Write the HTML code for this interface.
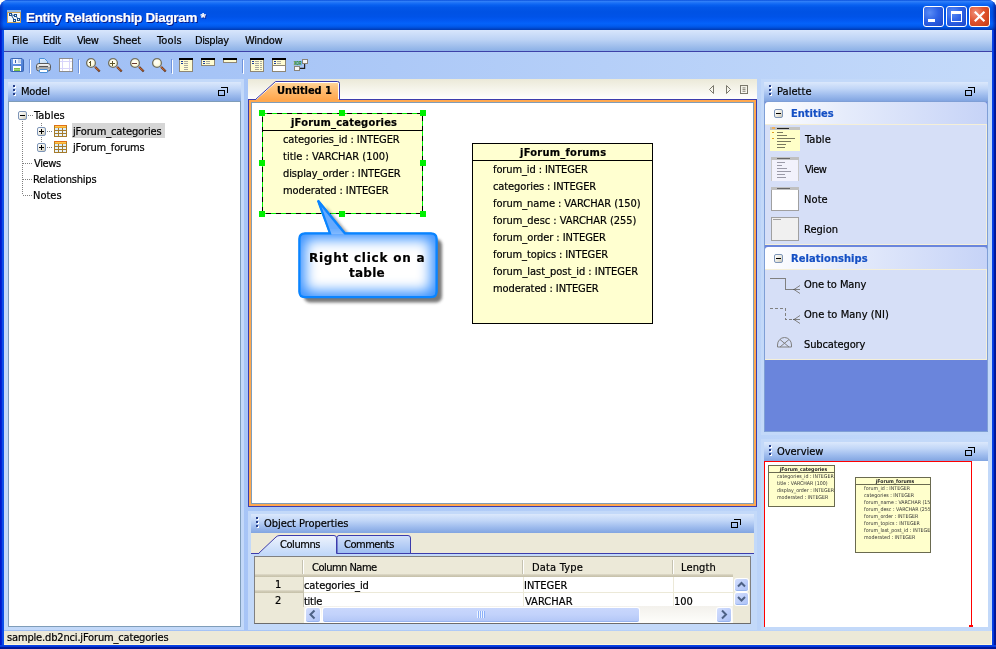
<!DOCTYPE html>
<html><head><meta charset="utf-8"><title>Entity Relationship Diagram *</title>
<style>
*{box-sizing:border-box;margin:0;padding:0}
html,body{width:996px;height:649px;overflow:hidden;background:#fff}
body{position:relative;font-family:"DejaVu Sans Condensed","Liberation Sans",sans-serif;font-size:11px;color:#000;line-height:13px}
.a{position:absolute}
.t{position:absolute;white-space:nowrap;line-height:13px;height:13px;will-change:transform;-webkit-text-stroke:0.2px}
.b{font-weight:bold}
svg{position:absolute;overflow:visible}
#win{left:0;top:0;width:996px;height:649px;background:#0b3fe0;border-radius:8px 8px 0 0;overflow:hidden}
#fl{left:0;top:30px;width:4px;height:619px;background:linear-gradient(to right,#0018cc 0%,#0018cc 30%,#0c4ce8 62%,#0a52ec 100%)}
#fr{left:992px;top:30px;width:4px;height:619px;background:linear-gradient(to right,#0a48e8 0%,#0538dc 40%,#001aa0 62%,#00138c 100%)}
#fb{left:0;top:645px;width:996px;height:4px;background:linear-gradient(to bottom,#0a48e8 0%,#0538dc 40%,#001aa0 62%,#00138c 100%)}
#titlebar{left:0;top:0;width:996px;height:30px;background:linear-gradient(to bottom,#0a50dc 0%,#2f7ef8 5%,#1a70f6 10%,#0860f0 17%,#0256e8 25%,#0052e4 40%,#0053e8 56%,#0259f2 68%,#0462fa 78%,#025cf0 86%,#0050dc 92%,#0042c0 97%,#0038b0 100%)}
.wb{position:absolute;top:6px;width:21px;height:21px;border:1px solid #fff;border-radius:3px;background:radial-gradient(circle at 30% 30%,#5a8cf5 0%,#2d62e6 45%,#1c46c8 100%)}
.wb.c{background:radial-gradient(circle at 30% 30%,#f0917a 0%,#e0532f 45%,#c23a12 100%)}
#client{left:4px;top:30px;width:988px;height:615px;background:linear-gradient(to right,#9ebef5 0%,#c4dafa 100%)}
.dock{position:absolute;background:#c3d9f9}
#menubar{left:4px;top:30px;width:988px;height:21px;background:linear-gradient(to bottom,#d8e6fc 0%,#bdd3f5 45%,#8bb0e6 100%)}
#menuline{left:4px;top:51px;width:988px;height:1px;background:#3d41a8}
#status{left:4px;top:631px;width:988px;height:14px;background:#ece9d8;border-right:1px solid #fff6d8;border-bottom:1px solid #fff6d8}
.hdr{position:absolute;height:19px;background:linear-gradient(to bottom,#dbe8fc 0%,#c1d6f7 35%,#9dbbed 70%,#82a5e1 100%)}
.sep{position:absolute;top:59px;width:1px;height:14px;background:#6f93dc}
.sep:after{content:"";position:absolute;left:1px;top:1px;width:1px;height:14px;background:#fff}
.grip{position:absolute;width:3px;height:13px}
.grip i{position:absolute;left:0;width:2px;height:2px;background:#27408b;box-shadow:1px 1px 0 #fff}
.tbl{position:absolute;background:#ffffd0;border:1px solid #000}
.tbl .h{position:absolute;left:0;right:0;top:0;height:17px;border-bottom:1px solid #000}
.hd{position:absolute;width:6px;height:6px;background:#00f000}
.grp{position:absolute;left:765px;width:222px;height:22px;background:linear-gradient(to right,#ffffff 0%,#e6ecfb 35%,#c6d3f7 100%);border-radius:3px 3px 0 0}
.grpb{position:absolute;left:765px;width:222px;background:#d6dff7;border:1px solid #f4efd8;border-left:none}
.mb{position:absolute;width:9px;height:9px;border:1px solid #7d95b8;border-radius:2px;background:linear-gradient(135deg,#fff 0%,#e8e6dc 60%,#c9c6b6 100%)}
.mb:before{content:"";position:absolute;left:1px;top:3px;width:5px;height:1px;background:#000}
.mb.p:after{content:"";position:absolute;left:3px;top:1px;width:1px;height:5px;background:#000}
.gt{color:#1550c4;font-weight:bold}
</style></head><body>
<div id="win" class="a">
<div id="titlebar" class="a"></div>
<div class="a" style="left:0;top:0;width:4px;height:30px;background:linear-gradient(to right,rgba(0,16,150,.55),rgba(0,16,150,0))"></div>
<div class="a" style="left:992px;top:0;width:4px;height:30px;background:linear-gradient(to left,rgba(0,10,120,.7),rgba(0,10,120,0))"></div>
<svg style="left:7px;top:10px" width="14" height="13" viewBox="0 0 14 13" shape-rendering="crispEdges">
<rect x="0" y="0" width="14" height="2" fill="#8db6e6"/><rect x="0" y="2" width="14" height="11" fill="#c9a25a"/><rect x="1" y="3" width="12" height="9" fill="#f2f7fb"/>
<g fill="none" stroke="#1a4f8f" stroke-width="1"><rect x="2.5" y="3.5" width="2" height="2"/><rect x="7.5" y="4.5" width="2" height="2"/><rect x="6.5" y="9.5" width="2" height="2"/><rect x="10.5" y="8.5" width="2" height="2"/></g>
<g stroke="#1a4f8f" stroke-width="1" shape-rendering="auto"><line x1="4.5" y1="5.5" x2="7" y2="9.5"/><line x1="9" y1="6.5" x2="11" y2="8.5"/><line x1="5" y1="5" x2="7.5" y2="5.5"/></g></svg>
<div class="t b" style="left:25.8px;top:9.5px;letter-spacing:-0.33px;font-family:'Liberation Sans',sans-serif;font-size:13.5px;color:#fff;text-shadow:1px 1px 0 #0a1883;line-height:16px;height:16px">Entity Relationship Diagram *</div>
<div class="wb" style="left:923px"><div class="a" style="left:4px;top:12px;width:7px;height:3px;background:#fff"></div></div>
<div class="wb" style="left:946px"><div class="a" style="left:4px;top:4px;width:11px;height:11px;border:1px solid #fff;border-top:3px solid #fff"></div></div>
<div class="wb c" style="left:969px"><svg style="left:0;top:0" width="19" height="19" viewBox="0 0 19 19"><path d="M4.800 4.700 L14.400 14.300 M14.400 4.700 L4.800 14.300" stroke="#fff" stroke-width="2.2" fill="none"/></svg></div>
<div id="fl" class="a"></div><div id="fr" class="a"></div><div id="fb" class="a"></div>
<div id="client" class="a"></div><div id="menubar" class="a"></div><div id="menuline" class="a"></div>
<div class="t " style="left:12.0px;top:34px;letter-spacing:-0.06px;">File</div>
<div class="t " style="left:42.9px;top:34px;letter-spacing:-0.32px;">Edit</div>
<div class="t " style="left:76.6px;top:34px;letter-spacing:-0.58px;">View</div>
<div class="t " style="left:113.1px;top:34px;letter-spacing:-0.13px;">Sheet</div>
<div class="t " style="left:157.0px;top:34px;letter-spacing:0.12px;">Tools</div>
<div class="t " style="left:194.8px;top:34px;letter-spacing:-0.39px;">Display</div>
<div class="t " style="left:244.8px;top:34px;letter-spacing:-0.27px;">Window</div>
<div class="sep" style="left:29px"></div>
<div class="sep" style="left:78px"></div>
<div class="sep" style="left:171px"></div>
<div class="sep" style="left:242px"></div>
<svg style="left:10px;top:58px" width="14" height="14" viewBox="0 0 14 14">
<defs><linearGradient id="sv" x1="0" y1="0" x2="1" y2="1"><stop offset="0" stop-color="#7aa6ee"/><stop offset="1" stop-color="#3f72cc"/></linearGradient></defs>
<path d="M1.500 0.500 H12 L13.500 2 V12.500 Q13.500 13.500 12.500 13.500 H1.500 Q0.500 13.500 0.500 12.500 V1.500 Q0.500 0.500 1.500 0.500 Z" fill="url(#sv)" stroke="#3a66b4"/>
<g shape-rendering="crispEdges"><rect x="3" y="1" width="8" height="5" fill="#f0f5fd"/><rect x="8" y="1" width="3" height="4" fill="#c2d2ec"/><rect x="5" y="2" width="1" height="3" fill="#3a66b4"/>
<rect x="3" y="8" width="8" height="5" fill="#fff"/><rect x="4" y="10" width="6" height="1" fill="#7cc04a"/><rect x="4" y="11" width="6" height="1" fill="#a6d87c"/><rect x="4" y="12" width="6" height="1" fill="#7cc04a"/></g></svg>
<svg style="left:36px;top:58px" width="15" height="15" viewBox="0 0 15 15">
<defs><linearGradient id="pb" x1="0" y1="0" x2="0" y2="1"><stop offset="0" stop-color="#fafafa"/><stop offset="0.45" stop-color="#d8d8d8"/><stop offset="0.55" stop-color="#9a9a9a"/><stop offset="1" stop-color="#e8e8e8"/></linearGradient>
<linearGradient id="pp" x1="0" y1="0" x2="1" y2="1"><stop offset="0" stop-color="#eaf3fc"/><stop offset="1" stop-color="#b6d4f2"/></linearGradient></defs>
<path d="M3.500 6.500 V0.500 H8.500 L11.500 3.500 V6.500 Z" fill="url(#pp)" stroke="#4a8fd8"/>
<rect x="0.500" y="5.500" width="14" height="7.500" rx="2.500" fill="url(#pb)" stroke="#5a5a5a"/>
<rect x="3" y="8" width="9" height="1" fill="#555" shape-rendering="crispEdges"/>
<rect x="3.500" y="11.500" width="8" height="3" rx="0.500" fill="#fff" stroke="#4a8fd8"/></svg>
<svg style="left:59px;top:58px" width="14" height="14" viewBox="0 0 14 14" shape-rendering="crispEdges">
<rect x="0.5" y="0.5" width="13" height="13" fill="#fff" stroke="#8c8c8c"/>
<g fill="#d9d5fa"><rect x="3" y="1" width="1" height="12"/><rect x="10" y="1" width="1" height="12"/><rect x="1" y="3" width="12" height="1"/><rect x="1" y="10" width="12" height="1"/></g></svg>
<svg style="left:86px;top:58px" width="15" height="15" viewBox="0 0 15 15">
<defs><radialGradient id="lga" cx="0.45" cy="0.4" r="0.6"><stop offset="0" stop-color="#ffffff"/><stop offset="0.6" stop-color="#fffce0"/><stop offset="1" stop-color="#e8e4c0"/></radialGradient></defs>
<line x1="9.200" y1="9" x2="13.700" y2="13.500" stroke="#4a3428" stroke-width="2.3"/>
<line x1="9" y1="8.800" x2="13.200" y2="13" stroke="#d2692e" stroke-width="1.700" stroke-dasharray="1.100 0.600"/>
<circle cx="5" cy="5" r="4.400" fill="url(#lga)" stroke="#707064" stroke-width="1.300"/><g fill="#5a5224" shape-rendering="crispEdges"><rect x="4" y="3" width="1.400" height="5"/><rect x="3" y="4" width="1" height="1"/></g></svg>
<svg style="left:108px;top:58px" width="15" height="15" viewBox="0 0 15 15">
<defs><radialGradient id="lgb" cx="0.45" cy="0.4" r="0.6"><stop offset="0" stop-color="#ffffff"/><stop offset="0.6" stop-color="#fffce0"/><stop offset="1" stop-color="#e8e4c0"/></radialGradient></defs>
<line x1="9.200" y1="9" x2="13.700" y2="13.500" stroke="#4a3428" stroke-width="2.3"/>
<line x1="9" y1="8.800" x2="13.200" y2="13" stroke="#d2692e" stroke-width="1.700" stroke-dasharray="1.100 0.600"/>
<circle cx="5" cy="5" r="4.400" fill="url(#lgb)" stroke="#707064" stroke-width="1.300"/><g fill="#5a5224" shape-rendering="crispEdges"><rect x="2" y="5" width="5" height="1"/><rect x="4" y="3" width="1" height="5"/></g></svg>
<svg style="left:130px;top:58px" width="15" height="15" viewBox="0 0 15 15">
<defs><radialGradient id="lgc" cx="0.45" cy="0.4" r="0.6"><stop offset="0" stop-color="#ffffff"/><stop offset="0.6" stop-color="#fffce0"/><stop offset="1" stop-color="#e8e4c0"/></radialGradient></defs>
<line x1="9.200" y1="9" x2="13.700" y2="13.500" stroke="#4a3428" stroke-width="2.3"/>
<line x1="9" y1="8.800" x2="13.200" y2="13" stroke="#d2692e" stroke-width="1.700" stroke-dasharray="1.100 0.600"/>
<circle cx="5" cy="5" r="4.400" fill="url(#lgc)" stroke="#707064" stroke-width="1.300"/><g shape-rendering="crispEdges"><rect x="2" y="5" width="5" height="1" fill="#6a3a30"/></g></svg>
<svg style="left:152px;top:58px" width="15" height="15" viewBox="0 0 15 15">
<defs><radialGradient id="lgd" cx="0.45" cy="0.4" r="0.6"><stop offset="0" stop-color="#ffffff"/><stop offset="0.6" stop-color="#fffce0"/><stop offset="1" stop-color="#e8e4c0"/></radialGradient></defs>
<line x1="9.200" y1="9" x2="13.700" y2="13.500" stroke="#4a3428" stroke-width="2.3"/>
<line x1="9" y1="8.800" x2="13.200" y2="13" stroke="#d2692e" stroke-width="1.700" stroke-dasharray="1.100 0.600"/>
<circle cx="5" cy="5" r="4.400" fill="url(#lgd)" stroke="#707064" stroke-width="1.300"/></svg>
<svg style="left:179px;top:58px" width="14" height="14" viewBox="0 0 14 14" shape-rendering="crispEdges"><rect x="0.5" y="0.5" width="13" height="13" fill="#fffcd2" stroke="#8e8674"/><rect x="0" y="0" width="14" height="2" fill="#000"/><rect x="2" y="3" width="2" height="1" fill="#1a3c9c"/><rect x="5" y="3" width="4" height="1" fill="#a8a8a0"/><rect x="2" y="5" width="2" height="1" fill="#1a3c9c"/><rect x="5" y="5" width="4" height="1" fill="#a8a8a0"/><rect x="5" y="7" width="4" height="1" fill="#a8a8a0"/><rect x="5" y="9" width="4" height="1" fill="#a8a8a0"/><rect x="5" y="11" width="4" height="1" fill="#a8a8a0"/></svg>
<svg style="left:201px;top:58px" width="14" height="8" viewBox="0 0 14 8" shape-rendering="crispEdges"><rect x="0.5" y="0.5" width="13" height="7" fill="#fffcd2" stroke="#8e8674"/><rect x="0" y="0" width="14" height="2" fill="#000"/><rect x="2" y="3" width="2" height="1" fill="#1a3c9c"/><rect x="5" y="3" width="4" height="1" fill="#a8a8a0"/><rect x="2" y="5" width="2" height="1" fill="#1a3c9c"/><rect x="5" y="5" width="4" height="1" fill="#a8a8a0"/></svg>
<svg style="left:223px;top:58px" width="14" height="5" viewBox="0 0 14 5" shape-rendering="crispEdges"><rect x="0.5" y="0.5" width="13" height="4" fill="#fffcd2" stroke="#8e8674"/><rect x="0" y="0" width="14" height="2" fill="#000"/></svg>
<svg style="left:250px;top:58px" width="14" height="14" viewBox="0 0 14 14" shape-rendering="crispEdges"><rect x="0.5" y="0.5" width="13" height="13" fill="#fffcd2" stroke="#8e8674"/><rect x="0" y="0" width="14" height="2" fill="#000"/><rect x="2" y="3" width="2" height="1" fill="#1a3c9c"/><rect x="5" y="3" width="4" height="1" fill="#a8a8a0"/><rect x="10" y="3" width="2" height="1" fill="#a8a8a0"/><rect x="2" y="5" width="2" height="1" fill="#1a3c9c"/><rect x="5" y="5" width="4" height="1" fill="#a8a8a0"/><rect x="10" y="5" width="2" height="1" fill="#a8a8a0"/><rect x="5" y="7" width="4" height="1" fill="#a8a8a0"/><rect x="10" y="7" width="2" height="1" fill="#a8a8a0"/><rect x="5" y="9" width="4" height="1" fill="#a8a8a0"/><rect x="10" y="9" width="2" height="1" fill="#a8a8a0"/><rect x="5" y="11" width="4" height="1" fill="#a8a8a0"/><rect x="10" y="11" width="2" height="1" fill="#a8a8a0"/></svg>
<svg style="left:272px;top:58px" width="14" height="14" viewBox="0 0 14 14" shape-rendering="crispEdges"><rect x="0.5" y="0.5" width="13" height="13" fill="#fffcd2" stroke="#8e8674"/><rect x="0" y="0" width="14" height="2" fill="#000"/><rect x="1" y="8" width="12" height="5" fill="#fff"/><rect x="1" y="7" width="12" height="1" fill="#8e8674"/><rect x="2" y="3" width="2" height="1" fill="#1a3c9c"/><rect x="5" y="3" width="4" height="1" fill="#a8a8a0"/><rect x="2" y="5" width="2" height="1" fill="#1a3c9c"/><rect x="5" y="5" width="4" height="1" fill="#a8a8a0"/></svg>
<svg style="left:294px;top:58px" width="15" height="14" viewBox="0 0 15 14">
<text x="0" y="7" font-family="Liberation Sans,sans-serif" font-size="5.500" font-weight="bold" fill="#2a8a2a" stroke="#2a8a2a" stroke-width="0.250" textLength="7.500" lengthAdjust="spacingAndGlyphs">XOR</text>
<path d="M10.600 6 V10.400 H6" fill="none" stroke="#222" stroke-width="1.200"/>
<rect x="8.500" y="1.500" width="5" height="4" fill="#f6f6f6" stroke="#8a8478"/><rect x="0.500" y="8.500" width="5" height="4" fill="#f6f6f6" stroke="#8a8478"/></svg>
<div class="dock" style="left:4px;top:79px;width:240px;height:551px"></div>
<div class="dock" style="left:248px;top:511px;width:509px;height:119px"></div>
<div class="dock" style="left:761px;top:79px;width:231px;height:356px"></div>
<div class="dock" style="left:761px;top:439px;width:231px;height:191px"></div>
<div class="hdr" style="left:8px;top:82px;width:233px"></div>
<div class="grip" style="left:13px;top:85px"><i style="top:0"></i><i style="top:4px"></i><i style="top:8px"></i></div>
<div class="t " style="left:20.8px;top:85px;letter-spacing:-0.17px;">Model</div>
<svg style="left:218px;top:87px" width="10" height="9" viewBox="0 0 10 9" shape-rendering="crispEdges"><path d="M3 0.500 H9.500 V6" fill="none" stroke="#000"/><rect x="0.5" y="3.5" width="6" height="5" fill="none" stroke="#000"/></svg>
<div class="a" style="left:8px;top:101px;width:233px;height:526px;background:#fff;border:1px solid #7f9db9"></div>
<div class="a" style="left:22px;top:121px;width:1px;height:74px;background:repeating-linear-gradient(to bottom,#808080 0 1px,transparent 1px 2px)"></div>
<div class="a" style="left:28px;top:115px;width:5px;height:1px;background:repeating-linear-gradient(to right,#808080 0 1px,transparent 1px 2px)"></div>
<div class="a" style="left:41px;top:123px;width:1px;height:20px;background:repeating-linear-gradient(to bottom,#808080 0 1px,transparent 1px 2px)"></div>
<div class="a" style="left:47px;top:131px;width:5px;height:1px;background:repeating-linear-gradient(to right,#808080 0 1px,transparent 1px 2px)"></div>
<div class="a" style="left:47px;top:147px;width:5px;height:1px;background:repeating-linear-gradient(to right,#808080 0 1px,transparent 1px 2px)"></div>
<div class="a" style="left:23px;top:163px;width:9px;height:1px;background:repeating-linear-gradient(to right,#808080 0 1px,transparent 1px 2px)"></div>
<div class="a" style="left:23px;top:179px;width:9px;height:1px;background:repeating-linear-gradient(to right,#808080 0 1px,transparent 1px 2px)"></div>
<div class="a" style="left:23px;top:195px;width:9px;height:1px;background:repeating-linear-gradient(to right,#808080 0 1px,transparent 1px 2px)"></div>
<div class="mb" style="left:18px;top:111px"></div>
<div class="mb p" style="left:37px;top:127px"></div>
<div class="mb p" style="left:37px;top:143px"></div>
<svg style="left:54px;top:125px" width="13" height="12" viewBox="0 0 13 12" shape-rendering="crispEdges"><rect x="0" y="0" width="13" height="12" fill="#a57b2c"/><rect x="0" y="0" width="13" height="1" fill="#e0701a"/><rect x="1" y="1" width="11" height="1" fill="#ffc94a"/><rect x="1" y="2" width="11" height="1" fill="#f6a62a"/><rect x="1" y="3" width="3" height="2" fill="#d8ecfa"/><rect x="5" y="3" width="3" height="2" fill="#d8ecfa"/><rect x="9" y="3" width="3" height="2" fill="#d8ecfa"/><rect x="1" y="6" width="3" height="2" fill="#e8f4fc"/><rect x="5" y="6" width="3" height="2" fill="#e8f4fc"/><rect x="9" y="6" width="3" height="2" fill="#e8f4fc"/><rect x="1" y="9" width="3" height="2" fill="#e8f4fc"/><rect x="5" y="9" width="3" height="2" fill="#e8f4fc"/><rect x="9" y="9" width="3" height="2" fill="#e8f4fc"/></svg>
<svg style="left:54px;top:141px" width="13" height="12" viewBox="0 0 13 12" shape-rendering="crispEdges"><rect x="0" y="0" width="13" height="12" fill="#a57b2c"/><rect x="0" y="0" width="13" height="1" fill="#e0701a"/><rect x="1" y="1" width="11" height="1" fill="#ffc94a"/><rect x="1" y="2" width="11" height="1" fill="#f6a62a"/><rect x="1" y="3" width="3" height="2" fill="#d8ecfa"/><rect x="5" y="3" width="3" height="2" fill="#d8ecfa"/><rect x="9" y="3" width="3" height="2" fill="#d8ecfa"/><rect x="1" y="6" width="3" height="2" fill="#e8f4fc"/><rect x="5" y="6" width="3" height="2" fill="#e8f4fc"/><rect x="9" y="6" width="3" height="2" fill="#e8f4fc"/><rect x="1" y="9" width="3" height="2" fill="#e8f4fc"/><rect x="5" y="9" width="3" height="2" fill="#e8f4fc"/><rect x="9" y="9" width="3" height="2" fill="#e8f4fc"/></svg>
<div class="a" style="left:72px;top:123px;width:93px;height:15px;background:#d6d6d6"></div>
<div class="t " style="left:33.9px;top:109px;letter-spacing:0.03px;">Tables</div>
<div class="t " style="left:73.3px;top:125px;letter-spacing:-0.14px;">jForum_categories</div>
<div class="t " style="left:73.3px;top:141px;letter-spacing:-0.17px;">jForum_forums</div>
<div class="t " style="left:33.6px;top:157px;letter-spacing:-0.38px;">Views</div>
<div class="t " style="left:32.9px;top:173px;letter-spacing:-0.19px;">Relationships</div>
<div class="t " style="left:32.9px;top:189px;letter-spacing:0.01px;">Notes</div>
<div class="a" style="left:248px;top:79px;width:509px;height:21px;background:linear-gradient(to bottom,#ebe9d8 0%,#f6f5ec 50%,#ffffff 100%)"></div>
<div class="a" style="left:248px;top:99px;width:509px;height:408px;background:#3c3cac"></div>
<div class="a" style="left:249px;top:100px;width:507px;height:406px;background:#ffa84f"></div>
<div class="a" style="left:251px;top:102px;width:503px;height:402px;background:#fff;border:1px solid #7f9db9"></div>
<svg style="left:248px;top:79px" width="100" height="23" viewBox="0 0 100 23">
<defs><linearGradient id="tg" x1="0" y1="0" x2="0" y2="1"><stop offset="0" stop-color="#ffd9a0"/><stop offset="0.25" stop-color="#ffc680"/><stop offset="1" stop-color="#ffa64c"/></linearGradient></defs>
<path d="M1 21 H8 L27.5 3 H89 Q91 3 91 5 V21 Z" fill="url(#tg)"/>
<path d="M8 20.5 L27.5 3.5 H89.5" fill="none" stroke="#fff" stroke-width="1"/>
<path d="M90.5 4 V20" fill="none" stroke="#fff" stroke-width="1"/>
<path d="M0 20.5 H7.5 L27.5 2.5 H89.5 Q91.5 2.5 91.5 4.5 V20.5" fill="none" stroke="#3c3cac" stroke-width="1"/>
</svg>
<div class="t b" style="left:277.1px;top:84px;letter-spacing:-0.07px;">Untitled 1</div>
<svg style="left:708px;top:84px" width="42" height="12" viewBox="0 0 42 12">
<path d="M5.500 1.500 V9.500 L1.500 5.500 Z" fill="none" stroke="#7a786c" stroke-width="1"/>
<path d="M18.500 1.500 V9.500 L22.500 5.500 Z" fill="none" stroke="#7a786c" stroke-width="1"/>
<rect x="32.500" y="1.500" width="7" height="8" fill="none" stroke="#7a786c"/><path d="M34.500 3.900 H37.500 M34.500 5.600 H37.500 M34.500 7.300 H37.500" stroke="#7a786c" stroke-width="0.9"/></svg>
<div class="a" style="left:262px;top:113px;width:161px;height:101px;background:#ffffd0"></div><svg style="left:262px;top:113px" width="161" height="101" viewBox="0 0 161 101" shape-rendering="crispEdges"><rect x="0.5" y="0.5" width="160" height="100" fill="none" stroke="#00f000"/><g stroke="#000" stroke-dasharray="5 5" fill="none"><path d="M0 0.500 H161" stroke-dashoffset="-5"/><path d="M0.500 0 V101" stroke-dashoffset="-4"/><path d="M160.5 0 V101" stroke-dashoffset="-3"/><path d="M0 100.5 H161" stroke-dashoffset="-4"/></g><rect x="1" y="17" width="159" height="1" fill="#000"/></svg><div class="t b" style="left:290.6px;top:116px;letter-spacing:0.22px;">jForum_categories</div><div class="t " style="left:283.1px;top:133px;letter-spacing:-0.1px;">categories_id : INTEGER</div><div class="t " style="left:283.4px;top:150px;letter-spacing:-0.0px;">title : VARCHAR (100)</div><div class="t " style="left:283.2px;top:167px;letter-spacing:-0.08px;">display_order : INTEGER</div><div class="t " style="left:282.9px;top:184px;letter-spacing:-0.1px;">moderated : INTEGER</div><div class="hd" style="left:259px;top:110px"></div><div class="hd" style="left:339px;top:110px"></div><div class="hd" style="left:420px;top:110px"></div><div class="hd" style="left:259px;top:160px"></div><div class="hd" style="left:420px;top:160px"></div><div class="hd" style="left:259px;top:211px"></div><div class="hd" style="left:339px;top:211px"></div><div class="hd" style="left:420px;top:211px"></div>
<div class="tbl" style="left:472px;top:143px;width:181px;height:181px"><div class="h"></div></div><div class="t b" style="left:520.4px;top:146px;letter-spacing:0.26px;">jForum_forums</div><div class="t " style="left:493.4px;top:163px;letter-spacing:-0.1px;">forum_id : INTEGER</div><div class="t " style="left:493.1px;top:180px;letter-spacing:-0.09px;">categories : INTEGER</div><div class="t " style="left:493.4px;top:197px;letter-spacing:-0.06px;">forum_name : VARCHAR (150)</div><div class="t " style="left:493.4px;top:214px;letter-spacing:-0.02px;">forum_desc : VARCHAR (255)</div><div class="t " style="left:493.4px;top:231px;letter-spacing:-0.05px;">forum_order : INTEGER</div><div class="t " style="left:493.4px;top:248px;letter-spacing:-0.09px;">forum_topics : INTEGER</div><div class="t " style="left:493.4px;top:265px;letter-spacing:-0.02px;">forum_last_post_id : INTEGER</div><div class="t " style="left:492.9px;top:282px;letter-spacing:-0.1px;">moderated : INTEGER</div>
<svg style="left:290px;top:195px" width="160" height="115" viewBox="290 195 160 115">
<defs>
<linearGradient id="cb" x1="0" y1="0" x2="0" y2="1"><stop offset="0" stop-color="#2b8cff"/><stop offset="1" stop-color="#1a7af0"/></linearGradient>
<radialGradient id="cg" cx="0.5" cy="0.5" r="0.5"><stop offset="0" stop-color="#fff"/><stop offset="0.55" stop-color="#fff"/><stop offset="1" stop-color="#fff" stop-opacity="0"/></radialGradient>
<filter id="cs" x="-20%" y="-20%" width="150%" height="150%"><feGaussianBlur stdDeviation="1.6"/></filter>
<filter id="ci" x="-20%" y="-20%" width="140%" height="140%"><feGaussianBlur stdDeviation="6.3"/></filter>
<clipPath id="cc"><path d="M305 233.400 H330 L318 200.500 L345 233.400 H431 Q436.600 233.400 436.600 239 V291.500 Q436.600 297.200 431 297.200 H305 Q299.400 297.200 299.400 291.500 V239 Q299.400 233.400 305 233.400 Z"/></clipPath>
</defs>
<g fill="#404040" opacity="0.7" filter="url(#cs)"><rect x="304" y="239" width="138" height="63.500" rx="6"/><path d="M336 238 L325 206 L352 238 Z" opacity="0.75"/></g>
<path d="M305 233.400 H330 L318 200.500 L345 233.400 H431 Q436.600 233.400 436.600 239 V291.500 Q436.600 297.200 431 297.200 H305 Q299.400 297.200 299.400 291.500 V239 Q299.400 233.400 305 233.400 Z" fill="#3a92ff" stroke="#0a84ff" stroke-width="1.5"/>
<path d="M330.500 234 L319.500 204 L343.500 234 Z" fill="#fff" opacity="0.22"/>
<g clip-path="url(#cc)"><rect x="305.500" y="239.500" width="125" height="51.500" rx="5" fill="#fff" filter="url(#ci)"/></g>
<path d="M305 233.400 H330 L318 200.500 L345 233.400 H431 Q436.600 233.400 436.600 239 V291.500 Q436.600 297.200 431 297.200 H305 Q299.400 297.200 299.400 291.500 V239 Q299.400 233.400 305 233.400 Z" fill="none" stroke="#0a84ff" stroke-width="2.2"/>
</svg>
<div class="t b" style="left:308.6px;top:252px;letter-spacing:0.76px;font-family:'DejaVu Sans','Liberation Sans',sans-serif;font-size:12px;">Right click on a</div>
<div class="t b" style="left:348.8px;top:267px;letter-spacing:0.25px;font-family:'DejaVu Sans','Liberation Sans',sans-serif;font-size:12px;">table</div>
<div class="hdr" style="left:251px;top:514px;width:503px"></div>
<div class="grip" style="left:256px;top:517px"><i style="top:0"></i><i style="top:4px"></i><i style="top:8px"></i></div>
<div class="t " style="left:264.2px;top:517px;letter-spacing:-0.06px;">Object Properties</div>
<svg style="left:731px;top:519px" width="10" height="9" viewBox="0 0 10 9" shape-rendering="crispEdges"><path d="M3 0.500 H9.500 V6" fill="none" stroke="#000"/><rect x="0.5" y="3.5" width="6" height="5" fill="none" stroke="#000"/></svg>
<div class="a" style="left:251px;top:533px;width:503px;height:21px;background:#ece9d8"></div>
<div class="a" style="left:251px;top:553px;width:503px;height:1px;background:#3c3cac"></div>
<svg style="left:251px;top:533px" width="170" height="22" viewBox="0 0 170 22">
<defs><linearGradient id="t1" x1="0" y1="0" x2="0" y2="1"><stop offset="0" stop-color="#eef3fd"/><stop offset="1" stop-color="#c3d9f9"/></linearGradient>
<linearGradient id="t2" x1="0" y1="0" x2="0" y2="1"><stop offset="0" stop-color="#d3e1fa"/><stop offset="1" stop-color="#9dbdf1"/></linearGradient></defs>
<path d="M86 20.5 V4.5 Q86 2.5 88 2.5 H157 Q159.500 2.5 159.500 5 V20.500 Z" fill="url(#t2)" stroke="#3c3cac"/>
<path d="M0 21 H7.5 L25 4 Q26.5 2.5 29 2.5 H83 Q85.500 2.5 85.500 5 V21 Z" fill="url(#t1)"/>
<path d="M0 20.500 H7.5 L25 4 Q26.5 2.5 29 2.5 H83 Q85.500 2.5 85.500 5 V20.500" fill="none" stroke="#3c3cac"/>
</svg>
<div class="t " style="left:280.1px;top:538px;letter-spacing:-0.43px;">Columns</div>
<div class="t " style="left:344.2px;top:538px;letter-spacing:-0.48px;">Comments</div>
<div class="a" style="left:254px;top:556px;width:497px;height:68px;background:#ece9d8;border:1px solid #808080;border-bottom-color:#6c6c6c"></div>
<div class="a" style="left:255px;top:574px;width:478px;height:3px;background:linear-gradient(to bottom,#e0dccb,#cfcab5,#c5c0a8)"></div>
<div class="a" style="left:302px;top:560px;width:2px;height:14px;border-left:1px solid #c5c2b0;border-right:1px solid #fff"></div>
<div class="a" style="left:522px;top:560px;width:2px;height:14px;border-left:1px solid #c5c2b0;border-right:1px solid #fff"></div>
<div class="a" style="left:672px;top:560px;width:2px;height:14px;border-left:1px solid #c5c2b0;border-right:1px solid #fff"></div>
<div class="t " style="left:312.3px;top:561px;letter-spacing:-0.51px;">Column Name</div>
<div class="t " style="left:531.8px;top:561px;letter-spacing:0.18px;">Data Type</div>
<div class="t " style="left:681.4px;top:561px;letter-spacing:0.11px;">Length</div>
<div class="a" style="left:304px;top:577px;width:429px;height:30px;background:#fff"></div>
<div class="a" style="left:304px;top:592px;width:429px;height:1px;background:#ece9d8"></div>
<div class="a" style="left:523px;top:577px;width:1px;height:30px;background:#ece9d8"></div>
<div class="a" style="left:673px;top:577px;width:1px;height:30px;background:#ece9d8"></div>
<div class="a" style="left:255px;top:590px;width:49px;height:3px;background:linear-gradient(to bottom,#e0dccb,#cfcab5,#c5c0a8)"></div>
<div class="a" style="left:303px;top:577px;width:1px;height:30px;background:#c5c2b0"></div>
<div class="t " style="left:275px;top:578px;">1</div>
<div class="t " style="left:275px;top:594px;">2</div>
<div class="t " style="left:304.0px;top:579px;letter-spacing:-0.08px;">categories_id</div>
<div class="t " style="left:304.3px;top:595px;letter-spacing:-0.27px;">title</div>
<div class="t " style="left:523.9px;top:579px;letter-spacing:0.0px;">INTEGER</div>
<div class="t " style="left:524.6px;top:595px;letter-spacing:0.06px;">VARCHAR</div>
<div class="t " style="left:674.3px;top:595px;letter-spacing:-0.0px;">100</div>
<div class="a" style="left:304px;top:606px;width:429px;height:17px;background:linear-gradient(to bottom,#f3f1ec,#fefefb)"></div>
<div class="a" style="left:305px;top:607px;width:16px;height:16px;border-radius:3px;background:#fff"></div><div class="a" style="left:306px;top:608px;width:14px;height:14px;border-radius:2px;background:linear-gradient(135deg,#d3defd 0%,#c0d0fa 50%,#acc2f6 100%);border-bottom:1px solid #98b4ee"></div><svg style="left:305px;top:607px" width="16" height="16" viewBox="0 0 16 16"><path d="M9.5 3.5 L5.5 7.5 L9.5 11.5" fill="none" stroke="#4d6185" stroke-width="2"/></svg>
<div class="a" style="left:716px;top:607px;width:16px;height:16px;border-radius:3px;background:#fff"></div><div class="a" style="left:717px;top:608px;width:14px;height:14px;border-radius:2px;background:linear-gradient(135deg,#d3defd 0%,#c0d0fa 50%,#acc2f6 100%);border-bottom:1px solid #98b4ee"></div><svg style="left:716px;top:607px" width="16" height="16" viewBox="0 0 16 16"><path d="M6.0 3.5 L10.0 7.5 L6.0 11.5" fill="none" stroke="#4d6185" stroke-width="2"/></svg>
<div class="a" style="left:322px;top:607px;width:318px;height:16px;border-radius:3px;background:#fff"></div>
<div class="a" style="left:323px;top:608px;width:316px;height:14px;border-radius:2px;background:linear-gradient(to bottom,#c9d7fc,#c2d2fb 50%,#b4c8f7);border-bottom:1px solid #98b4ee"></div>
<div class="a" style="left:477px;top:611px;width:8px;height:7px;background:repeating-linear-gradient(to right,#eef4fe 0 1px,#8cb0f8 1px 2px)"></div>
<div class="a" style="left:734px;top:578px;width:15px;height:14px;border-radius:3px;background:#fff"></div><div class="a" style="left:735px;top:579px;width:13px;height:12px;border-radius:2px;background:linear-gradient(135deg,#d3defd 0%,#c0d0fa 50%,#acc2f6 100%);border-bottom:1px solid #98b4ee"></div><svg style="left:734px;top:578px" width="15" height="14" viewBox="0 0 15 14"><path d="M4.0 8.5 L7.5 5.0 L11.0 8.5" fill="none" stroke="#4d6185" stroke-width="2"/></svg>
<div class="a" style="left:734px;top:592px;width:15px;height:14px;border-radius:3px;background:#fff"></div><div class="a" style="left:735px;top:593px;width:13px;height:12px;border-radius:2px;background:linear-gradient(135deg,#d3defd 0%,#c0d0fa 50%,#acc2f6 100%);border-bottom:1px solid #98b4ee"></div><svg style="left:734px;top:592px" width="15" height="14" viewBox="0 0 15 14"><path d="M4.0 5.0 L7.5 8.5 L11.0 5.0" fill="none" stroke="#4d6185" stroke-width="2"/></svg>
<div class="hdr" style="left:764px;top:82px;width:224px"></div>
<div class="grip" style="left:769px;top:85px"><i style="top:0"></i><i style="top:4px"></i><i style="top:8px"></i></div>
<div class="t " style="left:776.8px;top:85px;letter-spacing:0.06px;">Palette</div>
<svg style="left:965px;top:87px" width="10" height="9" viewBox="0 0 10 9" shape-rendering="crispEdges"><path d="M3 0.500 H9.500 V6" fill="none" stroke="#000"/><rect x="0.5" y="3.5" width="6" height="5" fill="none" stroke="#000"/></svg>
<div class="a" style="left:764px;top:101px;width:224px;height:331px;background:#6a85dc;border:1px solid #7f9fd6"></div>
<div class="grp" style="top:102px"></div><div class="mb" style="left:774px;top:109px"></div><div class="t gt" style="left:791.0px;top:107px;letter-spacing:-0.0px;">Entities</div><div class="grpb" style="top:124px;height:121px"></div>
<div class="grp" style="top:247px"></div><div class="mb" style="left:774px;top:254px"></div><div class="t gt" style="left:790.9px;top:252px;letter-spacing:0.08px;">Relationships</div><div class="grpb" style="top:269px;height:91px"></div>
<svg style="left:770px;top:127px" width="30" height="24" viewBox="0 0 30 24" shape-rendering="crispEdges"><rect x="0" y="0" width="30" height="24" fill="#ffffc8"/><rect x="0" y="0" width="30" height="3" fill="#c4c4c0"/><rect x="7" y="1" width="12" height="1" fill="#222"/><rect x="2" y="0" width="3" height="2" fill="#f0b060"/><rect x="7" y="5" width="6" height="1" fill="#7a7a60"/><rect x="7" y="8" width="10" height="1" fill="#7a7a60"/><rect x="7" y="11" width="18" height="1" fill="#7a7a60"/><rect x="7" y="14" width="14" height="1" fill="#7a7a60"/><rect x="7" y="17" width="9" height="1" fill="#7a7a60"/><rect x="7" y="20" width="8" height="1" fill="#7a7a60"/><rect x="2" y="5" width="2" height="1" fill="#e0a020"/><rect x="2" y="11" width="2" height="1" fill="#e0a020"/></svg>
<div class="t " style="left:804.9px;top:133px;letter-spacing:0.09px;">Table</div>
<svg style="left:771px;top:157px" width="28" height="24" viewBox="0 0 28 24" shape-rendering="crispEdges"><rect x="0" y="0" width="28" height="24" fill="#c8c8c8"/><rect x="1" y="3" width="26" height="21" fill="#f2f2fc"/><rect x="0" y="0" width="28" height="3" fill="#c0c0c0"/><rect x="6" y="1" width="13" height="1" fill="#666"/><rect x="6" y="5" width="8" height="1" fill="#9a9aa8"/><rect x="6" y="8" width="5" height="1" fill="#9a9aa8"/><rect x="6" y="11" width="10" height="1" fill="#9a9aa8"/><rect x="6" y="14" width="14" height="1" fill="#9a9aa8"/><rect x="6" y="17" width="8" height="1" fill="#9a9aa8"/><rect x="6" y="20" width="9" height="1" fill="#9a9aa8"/></svg>
<div class="t " style="left:804.6px;top:163px;letter-spacing:-0.52px;">View</div>
<svg style="left:771px;top:187px" width="28" height="24" viewBox="0 0 28 24" shape-rendering="crispEdges"><rect x="0.5" y="0.5" width="27" height="23" fill="#fff" stroke="#a0a0a0"/><rect x="0" y="0" width="28" height="3" fill="#c0c0c0"/><rect x="6" y="1" width="13" height="1" fill="#666"/></svg>
<div class="t " style="left:803.9px;top:193px;letter-spacing:0.09px;">Note</div>
<svg style="left:771px;top:217px" width="28" height="24" viewBox="0 0 28 24" shape-rendering="crispEdges"><rect x="0.5" y="0.5" width="27" height="23" fill="#f0f0f0" stroke="#a0a0a0"/><rect x="2" y="2" width="8" height="1" fill="#a0a0a0"/></svg>
<div class="t " style="left:803.9px;top:223px;letter-spacing:0.03px;">Region</div>
<svg style="left:770px;top:277px" width="31" height="20" viewBox="0 0 31 20"><path d="M0 1.500 H15.500 V12.500 H30" fill="none" stroke="#808080" shape-rendering="crispEdges"/><path d="M24 12.500 L30 8.500 M24 12.500 L30 16.500" fill="none" stroke="#808080"/><rect x="23" y="12" width="2" height="1" fill="#606060"/></svg>
<svg style="left:770px;top:307px" width="31" height="20" viewBox="0 0 31 20"><path d="M0 1.500 H15.500 V12.500 H24" fill="none" stroke="#808080" stroke-dasharray="3 2" shape-rendering="crispEdges"/><path d="M24 12.500 H30 M24 12.500 L30 8.500 M24 12.500 L30 16.500" fill="none" stroke="#808080"/><rect x="23" y="12" width="2" height="1" fill="#606060"/></svg>
<svg style="left:777px;top:337px" width="16" height="11" viewBox="0 0 16 11"><path d="M0.500 10 V8 A7 7.500 0 0 1 14.500 8 V10 Z" fill="none" stroke="#808080"/><path d="M3 2.500 L12 10 M12 2.500 L3 10" stroke="#808080" fill="none"/></svg>
<div class="t " style="left:804.1px;top:278px;letter-spacing:-0.07px;">One to Many</div>
<div class="t " style="left:804.1px;top:308px;letter-spacing:0.04px;">One to Many (NI)</div>
<div class="t " style="left:804.0px;top:338px;letter-spacing:-0.12px;">Subcategory</div>
<div class="hdr" style="left:764px;top:442px;width:224px"></div>
<div class="grip" style="left:769px;top:445px"><i style="top:0"></i><i style="top:4px"></i><i style="top:8px"></i></div>
<div class="t " style="left:777.1px;top:445px;letter-spacing:-0.04px;">Overview</div>
<svg style="left:965px;top:447px" width="10" height="9" viewBox="0 0 10 9" shape-rendering="crispEdges"><path d="M3 0.500 H9.500 V6" fill="none" stroke="#000"/><rect x="0.5" y="3.5" width="6" height="5" fill="none" stroke="#000"/></svg>
<div class="a" style="left:764px;top:461px;width:224px;height:166px;background:#fff;border-left:1px solid #f00"></div>
<div class="a" style="left:764px;top:461px;width:208px;height:1px;background:#f00"></div>
<div class="a" style="left:971px;top:461px;width:1px;height:166px;background:#f00"></div>
<div class="a" style="left:969px;top:625px;width:4px;height:2px;background:#f00"></div>
<div class="a" style="left:768px;top:465px;width:67px;height:42px;background:#ffffcc;border:1px solid #6a6a50;overflow:hidden"><div class="a" style="left:0;top:6px;width:67px;height:1px;background:#6a6a50"></div><div class="t b" style="left:2px;top:-3.500px;width:65px;text-align:center;font-size:5.100px;line-height:13px;color:#222;-webkit-text-stroke:0">jForum_categories</div><div class="t" style="left:8px;top:4px;font-size:5.25px;line-height:13px;color:#333;-webkit-text-stroke:0">categories_id : INTEGER</div><div class="t" style="left:8px;top:11px;font-size:5.25px;line-height:13px;color:#333;-webkit-text-stroke:0">title : VARCHAR (100)</div><div class="t" style="left:8px;top:18px;font-size:5.25px;line-height:13px;color:#333;-webkit-text-stroke:0">display_order : INTEGER</div><div class="t" style="left:8px;top:25px;font-size:5.25px;line-height:13px;color:#333;-webkit-text-stroke:0">moderated : INTEGER</div></div>
<div class="a" style="left:855px;top:477px;width:76px;height:76px;background:#ffffcc;border:1px solid #6a6a50;overflow:hidden"><div class="a" style="left:0;top:6px;width:76px;height:1px;background:#6a6a50"></div><div class="t b" style="left:2px;top:-3.500px;width:74px;text-align:center;font-size:5.100px;line-height:13px;color:#222;-webkit-text-stroke:0">jForum_forums</div><div class="t" style="left:8px;top:4px;font-size:5.25px;line-height:13px;color:#333;-webkit-text-stroke:0">forum_id : INTEGER</div><div class="t" style="left:8px;top:11px;font-size:5.25px;line-height:13px;color:#333;-webkit-text-stroke:0">categories : INTEGER</div><div class="t" style="left:8px;top:18px;font-size:5.25px;line-height:13px;color:#333;-webkit-text-stroke:0">forum_name : VARCHAR (150)</div><div class="t" style="left:8px;top:25px;font-size:5.25px;line-height:13px;color:#333;-webkit-text-stroke:0">forum_desc : VARCHAR (255)</div><div class="t" style="left:8px;top:32px;font-size:5.25px;line-height:13px;color:#333;-webkit-text-stroke:0">forum_order : INTEGER</div><div class="t" style="left:8px;top:39px;font-size:5.25px;line-height:13px;color:#333;-webkit-text-stroke:0">forum_topics : INTEGER</div><div class="t" style="left:8px;top:46px;font-size:5.25px;line-height:13px;color:#333;-webkit-text-stroke:0">forum_last_post_id : INTEGER</div><div class="t" style="left:8px;top:53px;font-size:5.25px;line-height:13px;color:#333;-webkit-text-stroke:0">moderated : INTEGER</div></div>
<div id="status" class="a"></div>
<div class="t " style="left:7.1px;top:631px;letter-spacing:-0.16px;height:14px;overflow:hidden">sample.db2nci.jForum_categories</div>
</div>
</body></html>
